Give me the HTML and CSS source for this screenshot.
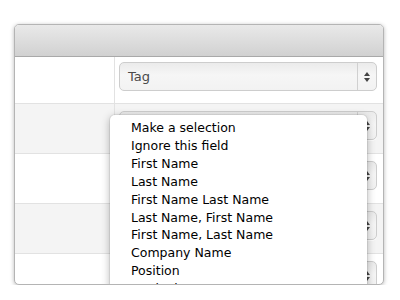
FILE: index.html
```html
<!DOCTYPE html>
<html>
<head>
<meta charset="utf-8">
<link rel="stylesheet" href="styles.css">
</head>
<body>
<div class="card">
  <div class="header"></div>
  <div class="row first">
    <div class="label"></div>
    <div class="field"><div class="select"><span class="value">Tag</span><span class="arrows"><i class="up"></i><i class="down"></i></span></div></div>
  </div>
  <div class="row alt">
    <div class="label"></div>
    <div class="field"><div class="select"><span class="value"></span><span class="arrows"><i class="up"></i><i class="down"></i></span></div></div>
  </div>
  <div class="row">
    <div class="label"></div>
    <div class="field"><div class="select"><span class="value"></span><span class="arrows"><i class="up"></i><i class="down"></i></span></div></div>
  </div>
  <div class="row alt">
    <div class="label"></div>
    <div class="field"><div class="select"><span class="value"></span><span class="arrows"><i class="up"></i><i class="down"></i></span></div></div>
  </div>
  <div class="row">
    <div class="label"></div>
    <div class="field"><div class="select"><span class="value"></span><span class="arrows"><i class="up"></i><i class="down"></i></span></div></div>
  </div>
  <ul class="menu">
    <li>Make a selection</li>
    <li>Ignore this field</li>
    <li>First Name</li>
    <li>Last Name</li>
    <li>First Name Last Name</li>
    <li>Last Name, First Name</li>
    <li>First Name, Last Name</li>
    <li>Company Name</li>
    <li>Position</li>
    <li>Work Phone</li>
  </ul>
</div>
</body>
</html>
```
FILE: styles.css
```css
html, body {
  margin: 0;
  padding: 0;
  background: #fff;
}
body {
  padding: 24px 15px 0 14px;
  font-family: "DejaVu Sans", "Liberation Sans", sans-serif;
}
.card {
  position: relative;
  width: 368px;
  height: 259px;
  border: 1px solid #b4b4b4;
  border-radius: 5px;
  overflow: hidden;
  box-shadow: 0 1px 4px rgba(0, 0, 0, 0.28);
  background: #fff;
}
.header {
  height: 31px;
  background: linear-gradient(#e9e9e9, #d1d1d1);
  border-bottom: 1px solid #a9a9a9;
}
.row {
  display: grid;
  grid-template-columns: 100px 1fr;
  height: 49px;
  border-bottom: 1px solid #e2e2e2;
}
.row.first {
  height: 46px;
}
.row.alt {
  background: #f4f4f4;
}
.label {
  border-right: 1px solid #e2e2e2;
}
.field {
  padding: 7px 6px 0 4px;
}
.row.first .field {
  padding-top: 5px;
}
.select {
  display: flex;
  height: 27px;
  border: 1px solid #cdcdcd;
  border-radius: 5px;
  background: linear-gradient(#ebebeb, #f6f6f6 45%, #f2f2f2);
  box-shadow: 0 1px 0 rgba(255, 255, 255, 0.9);
}
.value {
  flex: 1;
  padding-left: 8px;
  font-size: 13px;
  line-height: 27px;
  color: #4a4a4a;
}
.arrows {
  width: 18px;
  border-left: 1px solid #d0d0d0;
  display: flex;
  flex-direction: column;
  align-items: center;
  justify-content: center;
  gap: 2px;
}
.arrows i {
  display: block;
  width: 0;
  height: 0;
  border-left: 3.5px solid transparent;
  border-right: 3.5px solid transparent;
}
.arrows .up {
  border-bottom: 4px solid #444;
}
.arrows .down {
  border-top: 4px solid #444;
}
.menu {
  position: absolute;
  left: 95px;
  top: 90px;
  width: 257px;
  height: 180px;
  margin: 0;
  padding: 4px 0 0;
  list-style: none;
  background: #fff;
  border-radius: 5px;
  box-shadow: 0 2px 8px rgba(0, 0, 0, 0.3), 0 0 0 1px rgba(0, 0, 0, 0.06);
}
.menu li {
  padding-left: 21px;
  font-size: 12.5px;
  line-height: 17.9px;
  color: #000;
  white-space: nowrap;
}
```
